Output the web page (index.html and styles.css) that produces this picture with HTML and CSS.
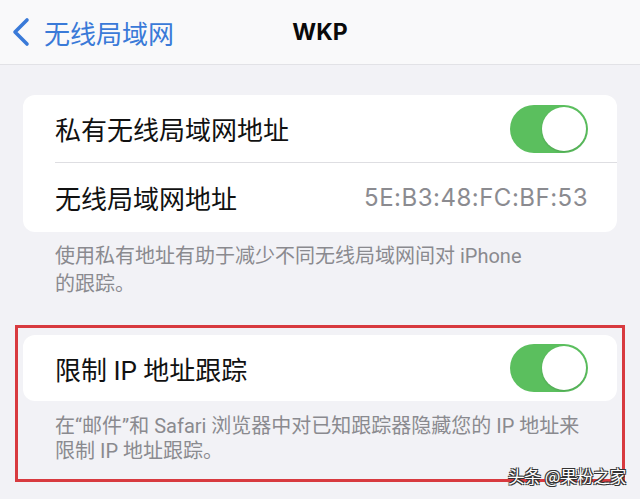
FILE: index.html
```html
<!DOCTYPE html>
<html lang="zh-CN">
<head>
    <meta charset="UTF-8">
    <meta name="viewport" content="width=device-width, initial-scale=1.0">
    <title>WKP</title>
    <link rel="stylesheet" href="styles.css">
</head>
<body>
    <div class="screen">
        <header class="nav">
            <a href="#" class="back">
                <svg class="chevron" width="20" height="30" viewBox="0 0 20 30">
                    <path d="M16 3 L4 15 L16 27" fill="none" stroke="#3a7ad8" stroke-width="3.6" stroke-linecap="round" stroke-linejoin="round"/>
                </svg>
                <span>无线局域网</span>
            </a>
            <h1 class="title">WKP</h1>
            <div></div>
        </header>

        <main class="content">
            <div class="card">
                <div class="row">
                    <span class="label">私有无线局域网地址</span>
                    <span class="toggle"><span class="knob"></span></span>
                </div>
                <div class="row row-sep">
                    <span class="label">无线局域网地址</span>
                    <span class="value">5E:B3:48:FC:BF:53</span>
                </div>
            </div>
            <p class="note">使用私有地址有助于减少不同无线局域网间对 iPhone<br>的跟踪。</p>

            <section class="marked">
                <div class="card">
                    <div class="row row-single">
                        <span class="label">限制 IP 地址跟踪</span>
                        <span class="toggle"><span class="knob"></span></span>
                    </div>
                </div>
                <p class="note">在“邮件”和 Safari 浏览器中对已知跟踪器隐藏您的 IP 地址来<br>限制 IP 地址跟踪。</p>
            </section>
        </main>

        <div class="watermark">头条 @果粉之家</div>
    </div>
</body>
</html>
```

FILE: styles.css
```css
body {
    margin: 0;
    padding: 0;
    background: #f2f2f6;
    font-family: "Roboto", "Noto Sans CJK SC", sans-serif;
}
.screen {
    position: relative;
    width: 640px;
    height: 499px;
    overflow: hidden;
    background: #f2f2f6;
}
.nav {
    height: 64px;
    display: grid;
    grid-template-columns: 1fr auto 1fr;
    align-items: center;
    background: #f9f9fa;
    border-bottom: 1px solid #e2e2e6;
}
.back {
    display: flex;
    align-items: center;
    gap: 13px;
    padding-left: 11px;
    color: #3a7ad8;
    text-decoration: none;
    font-size: 26px;
}
.chevron {
    display: block;
}
.title {
    margin: 0;
    font-family: "Inter", sans-serif;
    font-size: 23px;
    font-weight: 700;
    color: #0a0a0a;
}
.content {
    padding: 30px 23px 0;
}
.card {
    background: #ffffff;
    border-radius: 12px;
}
.row {
    height: 67px;
    display: flex;
    align-items: center;
    justify-content: space-between;
    padding: 0 29px 0 32px;
}
.row-sep {
    height: 69px;
    border-top: 1px solid #dedee2;
    margin-left: 32px;
    padding-left: 0;
}
.row-single {
    height: 66px;
}
.label {
    font-size: 26px;
    color: #111111;
}
.value {
    font-family: "Inter", sans-serif;
    font-size: 24px;
    letter-spacing: 0.5px;
    color: #8b8b90;
}
.toggle {
    width: 78px;
    height: 48px;
    border-radius: 24px;
    background: #5bbf5e;
    display: flex;
    justify-content: flex-end;
    align-items: center;
    padding-right: 2px;
    box-sizing: border-box;
}
.knob {
    width: 44px;
    height: 44px;
    border-radius: 50%;
    background: #ffffff;
    box-shadow: 0 1px 2px rgba(0,0,0,0.15);
}
.note {
    margin: 10px 0 0;
    padding: 0 32px;
    font-size: 20px;
    line-height: 28px;
    color: #8a8a8f;
    white-space: nowrap;
}
.marked {
    margin: 27px -8px 0;
    padding: 7px 5px 15px;
    border: 3px solid #d83a3f;
}
.marked .note {
    margin-top: 13px;
    line-height: 25px;
}
.watermark {
    position: absolute;
    left: 508px;
    top: 464px;
    font-size: 16.5px;
    font-family: "Noto Sans CJK SC", sans-serif;
    color: #ffffff;
    text-shadow: 1px 1px 0 #333, -1px -1px 0 #333, 1px -1px 0 #333, -1px 1px 0 #333;
    white-space: nowrap;
}
```
